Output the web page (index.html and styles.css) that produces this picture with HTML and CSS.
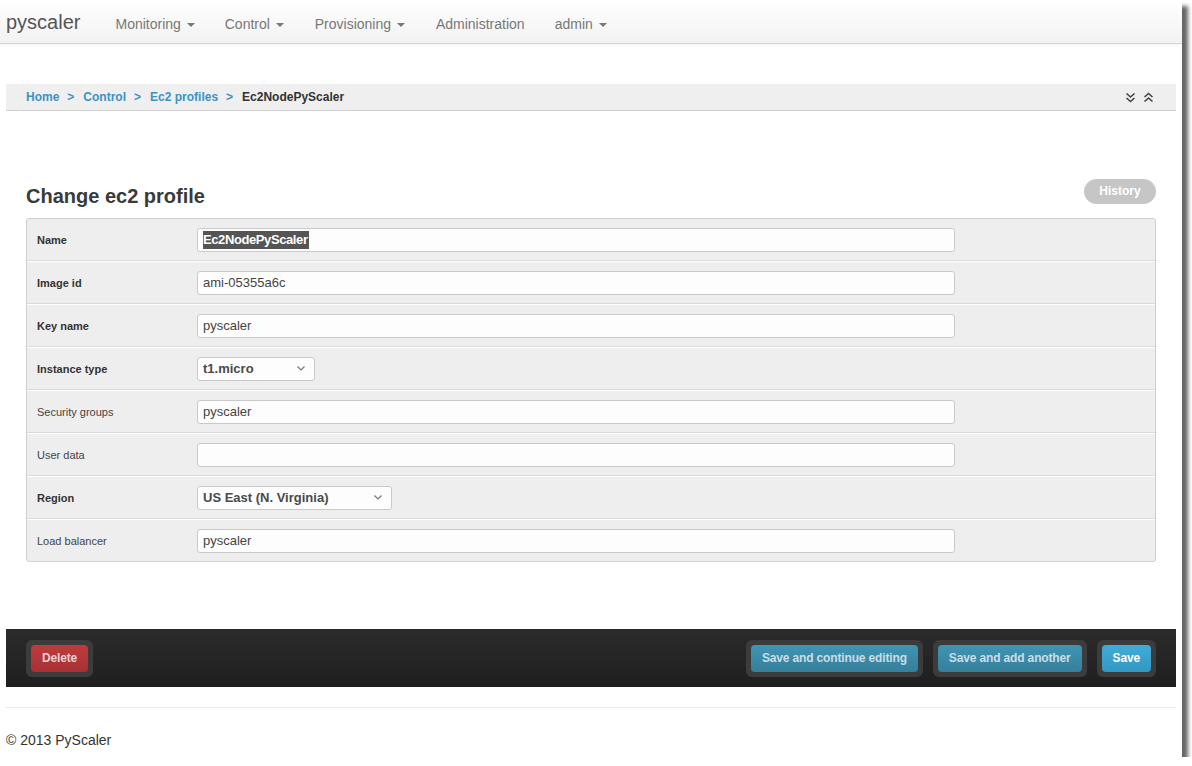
FILE: index.html
```html
<!DOCTYPE html>
<html lang="en">
<head>
    <meta charset="UTF-8">
    <title>Change ec2 profile | PyScaler</title>
    <link rel="stylesheet" href="styles.css">
</head>
<body>

<div class="page">

<nav class="navbar">
    <span class="brand">pyscaler</span>
    <ul class="nav">
        <li>Monitoring <b class="caret"></b></li>
        <li>Control <b class="caret"></b></li>
        <li>Provisioning <b class="caret"></b></li>
        <li>Administration</li>
        <li>admin <b class="caret"></b></li>
    </ul>
</nav>

<div class="container">

    <div class="breadcrumbs">
        <div class="crumbs">
            <a href="#">Home</a><span class="sep">&gt;</span><a href="#">Control</a><span class="sep">&gt;</span><a href="#">Ec2 profiles</a><span class="sep">&gt;</span><span class="current">Ec2NodePyScaler</span>
        </div>
        <div class="tools">
            <!-- collapse / expand all -->
            <svg width="11" height="11" viewBox="0 0 11 11"><polyline points="1.5,1.5 5.5,5 9.5,1.5" /><polyline points="1.5,6 5.5,9.5 9.5,6" /></svg>
            <svg width="11" height="11" viewBox="0 0 11 11"><polyline points="1.5,5 5.5,1.5 9.5,5" /><polyline points="1.5,9.5 5.5,6 9.5,9.5" /></svg>
        </div>
    </div>

    <div class="title-row">
        <h1>Change ec2 profile</h1>
        <a class="history" href="#">History</a>
    </div>

    <div class="module">
        <div class="row">
            <label class="required">Name</label>
            <div class="field"><span class="selected">Ec2NodePyScaler</span></div>
        </div>
        <div class="row">
            <label class="required">Image id</label>
            <div class="field">ami-05355a6c</div>
        </div>
        <div class="row">
            <label class="required">Key name</label>
            <div class="field">pyscaler</div>
        </div>
        <div class="row">
            <label class="required">Instance type</label>
            <div class="select small">t1.micro
                <svg width="8" height="5" viewBox="0 0 8 5"><polyline points="0.5,0.5 4,4 7.5,0.5" /></svg>
            </div>
        </div>
        <div class="row">
            <label>Security groups</label>
            <div class="field">pyscaler</div>
        </div>
        <div class="row">
            <label>User data</label>
            <div class="field"></div>
        </div>
        <div class="row">
            <label class="required">Region</label>
            <div class="select medium">US East (N. Virginia)
                <svg width="8" height="5" viewBox="0 0 8 5"><polyline points="0.5,0.5 4,4 7.5,0.5" /></svg>
            </div>
        </div>
        <div class="row">
            <label>Load balancer</label>
            <div class="field">pyscaler</div>
        </div>
    </div>

    <div class="submit-row">
        <div class="left">
            <span class="halo"><a class="btn btn-delete" href="#">Delete</a></span>
        </div>
        <div class="right">
            <span class="halo"><a class="btn btn-save-alt" href="#">Save and continue editing</a></span>
            <span class="halo"><a class="btn btn-save-alt" href="#">Save and add another</a></span>
            <span class="halo"><a class="btn btn-save" href="#">Save</a></span>
        </div>
    </div>

    <footer>
        <p>&copy; 2013 PyScaler</p>
    </footer>

</div>
</div>

</body>
</html>
```

FILE: styles.css
```css
body {
    font-family: "Liberation Sans", Arial, sans-serif;
    margin: 0;
    padding: 0;
    background-color: #fff;
    color: #333;
}
.page {
    width: 1182px;
    height: 757px;
    background: #fff;
    box-shadow: 6px 6px 4px rgba(0,0,0,0.6);
    overflow: hidden;
}
a {
    text-decoration: none;
}

/* top bar */
.navbar {
    height: 44px;
    box-sizing: border-box;
    background: linear-gradient(#ffffff, #f2f2f2);
    border-bottom: 1px solid #d4d4d4;
    box-shadow: 0 1px 4px rgba(0,0,0,0.06);
    display: flex;
    align-items: center;
    padding: 4px 0 0 6px;
}
.brand {
    font-size: 20px;
    color: #555;
    margin-right: 20px;
    margin-top: -2px;
}
.nav {
    list-style: none;
    margin: 0;
    padding: 0;
    display: flex;
}
.nav li {
    font-size: 14px;
    color: #777;
    padding: 0 15px;
}
.nav li:nth-child(2) {
    padding-right: 16px;
}
.nav li:nth-child(4) {
    padding-left: 16px;
}
.caret {
    display: inline-block;
    width: 0;
    height: 0;
    margin-left: 2px;
    vertical-align: middle;
    border-top: 4px solid #777;
    border-left: 4px solid transparent;
    border-right: 4px solid transparent;
}

.container {
    padding: 0 6px;
}

/* breadcrumbs */
.breadcrumbs {
    margin-top: 40px;
    height: 27px;
    box-sizing: border-box;
    background: #efefef;
    border-bottom: 1px solid #d0d0d0;
    display: flex;
    align-items: center;
    justify-content: space-between;
    padding: 0 20px;
    font-size: 12px;
    font-weight: bold;
}
.crumbs a {
    color: #3b93c3;
}
.crumbs .sep {
    color: #3b93c3;
    margin: 0 9px 0 8px;
}
.crumbs .current {
    color: #333;
}
.tools {
    display: flex;
    gap: 7px;
    margin-right: 2px;
}
.tools svg polyline {
    fill: none;
    stroke: #444;
    stroke-width: 1.6;
}

/* heading */
.title-row {
    display: flex;
    justify-content: space-between;
    align-items: flex-end;
    padding: 0 20px;
    margin-top: 68px;
}
h1 {
    font-size: 20px;
    font-weight: bold;
    color: #3a3a3a;
    margin: 0;
}
.history {
    background: #c6c6c6;
    color: #fff;
    font-size: 12px;
    font-weight: bold;
    border-radius: 13px;
    width: 72px;
    height: 25px;
    line-height: 25px;
    text-align: center;
    margin-bottom: 4px;
}

/* form rows */
.module {
    margin: 10px 20px 0;
    border: 1px solid #cfcfcf;
    border-radius: 3px;
    background: #eee;
    overflow: hidden;
}
.row {
    height: 43px;
    box-sizing: border-box;
    display: flex;
    align-items: center;
    padding-left: 10px;
    border-top: 1px solid #fff;
    border-bottom: 1px solid #d9d9d9;
}
.row:first-child {
    border-top: none;
    height: 42px;
}
.row:last-child {
    border-bottom: none;
    height: 42px;
}
.row label {
    width: 160px;
    font-size: 11px;
    color: #444;
}
.row label.required {
    font-weight: bold;
    color: #333;
}
.field, .select {
    height: 24px;
    box-sizing: border-box;
    background: #fdfdfd;
    border: 1px solid #c9c9c9;
    border-radius: 3px;
    font-size: 13px;
    color: #444;
    line-height: 22px;
    padding: 0 5px;
}
.field {
    width: 758px;
}
.selected {
    background: #555;
    color: #fff;
    font-weight: bold;
    letter-spacing: -0.4px;
    padding: 1px 1px 2px 0;
}
.select {
    display: flex;
    justify-content: space-between;
    align-items: center;
    padding-right: 9px;
    font-weight: bold;
    color: #4a4a4a;
}
.select.small {
    width: 118px;
}
.select.medium {
    width: 195px;
}
.select svg polyline {
    fill: none;
    stroke: #777;
    stroke-width: 1.2;
}

/* action bar */
.submit-row {
    margin-top: 67px;
    height: 58px;
    background: linear-gradient(#2b2b2b, #1f1f1f);
    display: flex;
    justify-content: space-between;
    align-items: center;
    padding: 0 20px;
}
.right {
    display: flex;
    gap: 10px;
}
.halo {
    display: inline-block;
    padding: 5px;
    border-radius: 6px;
    background: #3c3c3c;
}
.btn {
    display: block;
    height: 27px;
    line-height: 27px;
    padding: 0 11px;
    border-radius: 4px;
    font-size: 12px;
    font-weight: bold;
    letter-spacing: -0.15px;
}
.btn-delete {
    background: linear-gradient(#bd3c3e, #a83033);
    color: #eed0d0;
}
.btn-save-alt {
    background: linear-gradient(#3f95b3, #357f9a);
    color: #c9dde6;
}
.btn-save {
    background: linear-gradient(#41acd8, #3397c2);
    color: #fff;
}

footer {
    margin-top: 20px;
    border-top: 1px solid #eaeaea;
}
footer p {
    margin: 0;
    padding-top: 24px;
    font-size: 14px;
    color: #333;
}
```
